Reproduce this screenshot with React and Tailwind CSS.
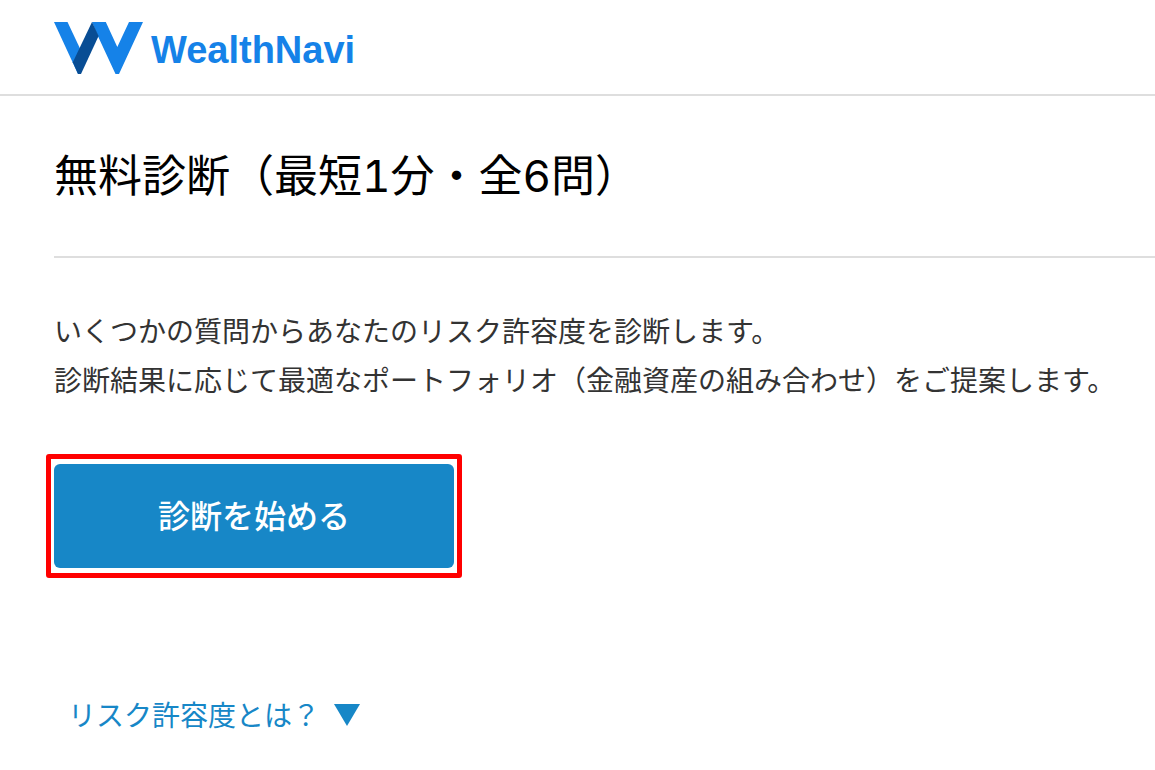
import { useState } from "react";

const Logo = () => (
  <a href="#top" className="flex items-center gap-2 text-[#1582e8]">
    <svg viewBox="0 0 89 52" className="h-[52px] w-[89px]" aria-hidden="true">
      <path d="M0 0H13.5L26 26.5L27 52H24Z" fill="#1582e8" />
      <path d="M38 0H51.8L63.3 25L75 0H89L65 52H61.5L42 10Z" fill="#1582e8" />
      <path d="M38 0L44.6 14L27 52H24L18.8 40.2Z" fill="#084d94" />
    </svg>
    <span className="pt-1 font-['Liberation_Sans',sans-serif] text-[38px] leading-none font-bold">
      WealthNavi
    </span>
  </a>
);

const App = () => {
  const [open, setOpen] = useState(false);

  return (
    <div className="min-h-screen bg-white font-['Noto_Sans_CJK_JP',sans-serif] text-[#333333]">
      <header className="flex h-24 items-center border-b-2 border-[#dedede] px-[54px] pt-0.5">
        <Logo />
      </header>

      <main className="pl-[54px]">
        <div className="border-b-2 border-[#dedede] py-12">
          <h1 className="font-['Inter','Noto_Sans_CJK_JP',sans-serif] text-[44px] leading-[64px] text-black tabular-nums">
            無料診断（最短1分・全6問）
          </h1>
        </div>

        <p className="pt-12 text-[28px] leading-[49px]">
          いくつかの質問からあなたのリスク許容度を診断します。
          <br />
          診断結果に応じて最適なポートフォリオ（金融資産の組み合わせ）をご提案します。
        </p>

        {/* 赤枠で強調した開始ボタン */}
        <div className="mt-[50px] -ml-2 w-fit rounded-[3px] border-[5px] border-[#ff0000] px-[3px] py-[5px]">
          <button
            type="button"
            className="h-[104px] w-[400px] cursor-pointer rounded-md bg-[#1787c7] pb-1 text-[32px] font-medium text-white"
          >
            診断を始める
          </button>
        </div>

        <button
          type="button"
          aria-expanded={open}
          onClick={() => setOpen(!open)}
          className="mt-28 ml-[14px] flex cursor-pointer items-center gap-[14px] text-[28px] leading-[49px] text-[#1787c7]"
        >
          リスク許容度とは？
          <svg viewBox="0 0 26 22" className="h-[22px] w-[26px]" aria-hidden="true">
            <path d="M0 0H26L13 22Z" fill="currentColor" />
          </svg>
        </button>
        {open && (
          <p className="px-4 pb-12 text-[28px] leading-[49px]">
            資産運用において、どの程度のリスクを受け入れられるかを示す度合いです。
          </p>
        )}
      </main>
    </div>
  );
};

export default App;
